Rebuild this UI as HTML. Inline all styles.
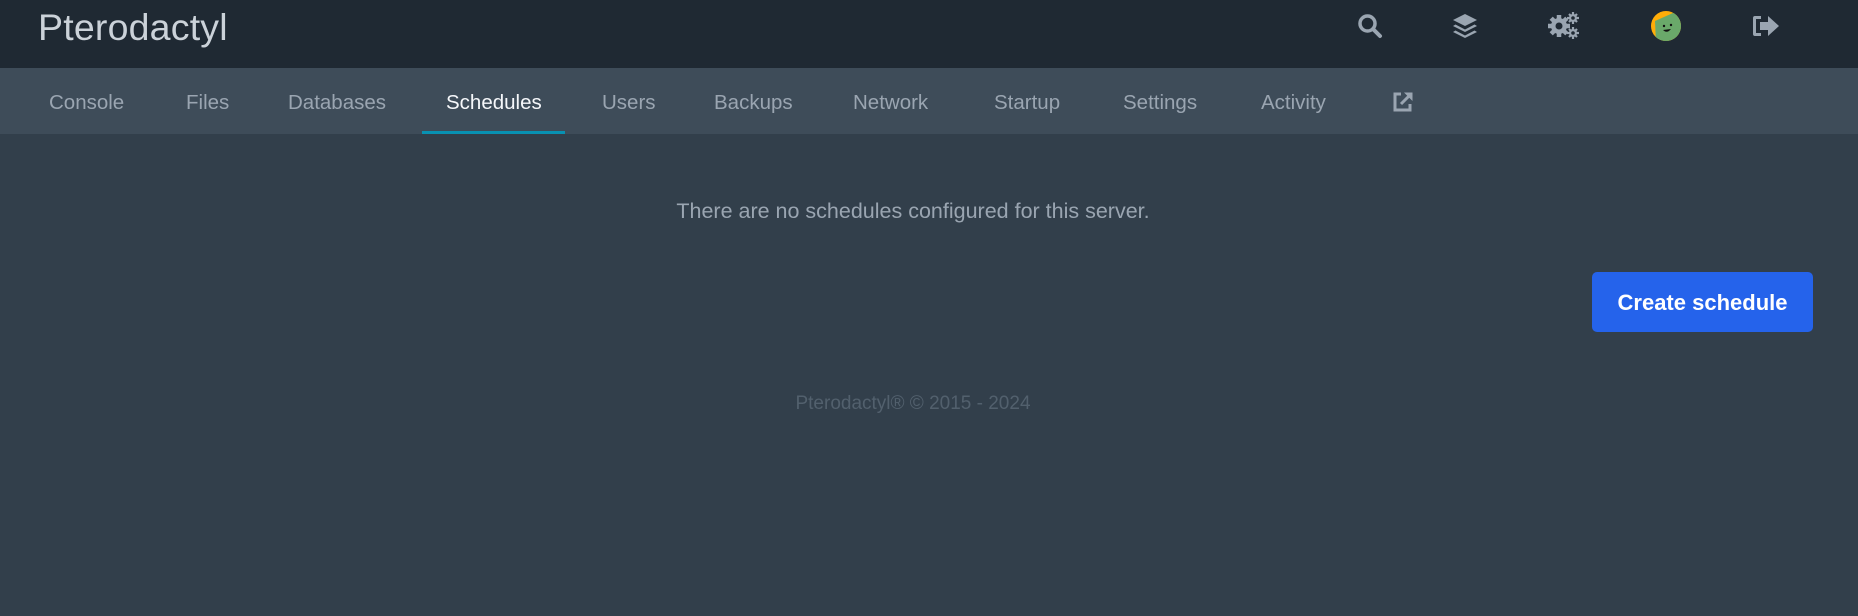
<!DOCTYPE html>
<html><head><meta charset="utf-8"><style>
*{margin:0;padding:0;box-sizing:border-box}
html,body{width:1858px;height:616px;overflow:hidden;background:#323f4b;font-family:"Liberation Sans",sans-serif}
.hdr{position:absolute;left:0;top:0;width:1858px;height:68px;background:#1f2933}
.title{position:absolute;left:38px;top:6px;font-size:37.5px;color:#cbd2d9;letter-spacing:0.2px}
.nav{position:absolute;left:0;top:68px;width:1858px;height:66px;background:#3e4c59}
.nav span{position:absolute;top:23px;font-size:20.5px;color:#9aa5b1}
.nav .act{color:#f5f7fa}
.ul{position:absolute;left:422px;top:131px;width:143px;height:3px;background:#0891b2}
.ico{position:absolute}
.msg{position:absolute;left:0;width:1826px;top:199px;text-align:center;font-size:21.5px;color:#9aa5b1}
.btn{position:absolute;left:1592px;top:272px;width:221px;height:60px;background:#2563eb;border-radius:5px;color:#fff;font-weight:bold;font-size:22px;text-align:center;line-height:62px}
.ft{position:absolute;left:0;width:1826px;top:393px;text-align:center;font-size:19px;color:#52606d}
</style></head><body>
<div class="hdr">
<div class="title">Pterodactyl</div>
<svg class="ico" style="left:1357px;top:13px" width="26" height="26" viewBox="0 0 26 26"><circle cx="10.5" cy="10.5" r="7.5" fill="none" stroke="#9aa5b1" stroke-width="3.5"/><line x1="16" y1="16" x2="23" y2="23" stroke="#9aa5b1" stroke-width="4" stroke-linecap="round"/></svg>
<svg class="ico" style="left:1452px;top:13px" width="26" height="26" viewBox="0 0 26 26" fill="#9aa5b1"><path d="M13 1 L25 7 L13 13 L1 7Z"/><path d="M3.5 11.5 L13 16.5 L22.5 11.5 L25 13 L13 19 L1 13Z"/><path d="M3.5 17.5 L13 22.5 L22.5 17.5 L25 19 L13 25 L1 19Z"/></svg>
<svg class="ico" style="left:1546px;top:10px" width="36" height="32" viewBox="0 0 36 32"><g fill="#9aa5b1"><circle cx="13" cy="16" r="8"/><g stroke="#9aa5b1" stroke-width="4.5"><line x1="13" y1="5" x2="13" y2="27"/><line x1="2" y1="16" x2="24" y2="16"/><line x1="5.2" y1="8.2" x2="20.8" y2="23.8"/><line x1="20.8" y1="8.2" x2="5.2" y2="23.8"/></g></g>
<g fill="#9aa5b1" stroke="#9aa5b1" stroke-width="2.2"><circle cx="27" cy="8" r="4" stroke="none"/><line x1="27" y1="2" x2="27" y2="14"/><line x1="21" y1="8" x2="33" y2="8"/><line x1="23" y1="4" x2="31" y2="12"/><line x1="31" y1="4" x2="23" y2="12"/>
<circle cx="27" cy="23" r="4" stroke="none"/><line x1="27" y1="17" x2="27" y2="29"/><line x1="21" y1="23" x2="33" y2="23"/><line x1="23" y1="19" x2="31" y2="27"/><line x1="31" y1="19" x2="23" y2="27"/></g>
<circle cx="13" cy="16" r="3.5" fill="#1f2933"/><circle cx="27" cy="8" r="1.8" fill="#1f2933"/><circle cx="27" cy="23" r="1.8" fill="#1f2933"/></svg>
<svg class="ico" style="left:1651px;top:11px" width="30" height="30" viewBox="0 0 30 30"><defs><clipPath id="c"><circle cx="15" cy="15" r="15"/></clipPath></defs><g clip-path="url(#c)"><rect width="30" height="30" fill="#ffad08"/><path d="M4 10 L22 2 L32 4 L32 32 L5 32Z" fill="#6aa96a"/></g><circle cx="13" cy="15" r="1.2" fill="#111"/><circle cx="20" cy="14" r="1.2" fill="#111"/><path d="M12 19 Q16 23 20 18Z" fill="#111"/></svg>
<svg class="ico" style="left:1752px;top:15px" width="30" height="22" viewBox="0 0 30 22" fill="#9aa5b1"><path d="M9 1 H3 Q1 1 1 3 V19 Q1 21 3 21 H9 V18 H4 V4 H9Z"/><path d="M8 7 H16 V1 L27 11 L16 21 V15 H8Z"/></svg>
</div>
<div class="nav">
<span style="left:49px">Console</span>
<span style="left:186px">Files</span>
<span style="left:288px">Databases</span>
<span class="act" style="left:446px">Schedules</span>
<span style="left:602px">Users</span>
<span style="left:714px">Backups</span>
<span style="left:853px">Network</span>
<span style="left:994px">Startup</span>
<span style="left:1123px">Settings</span>
<span style="left:1261px">Activity</span>
<svg class="ico" style="left:1392px;top:23px" width="22" height="22" viewBox="0 0 22 22" fill="none" stroke="#9aa5b1" stroke-width="3"><path d="M9 3 H3 V19 H18 V13"/><path d="M9 13 L19 3"/><path d="M12 1.5 H20.5 V10Z" fill="#9aa5b1" stroke="none"/></svg>
</div>
<div class="ul"></div>
<div class="msg">There are no schedules configured for this server.</div>
<div class="btn">Create schedule</div>
<div class="ft">Pterodactyl® © 2015 - 2024</div>
</body></html>
